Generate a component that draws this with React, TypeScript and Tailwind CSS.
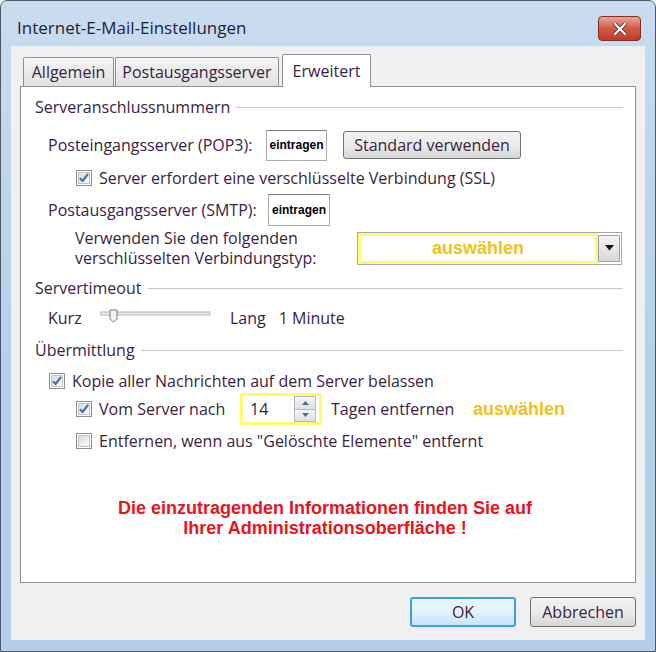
import React from 'react';

const label = 'text-[16px] text-[#3a2340] leading-[20px] whitespace-nowrap';
const arial = { fontFamily: '"Liberation Sans", Arial, sans-serif' };

function Check({ checked }: { checked: boolean }) {
  return (
    <svg width="16" height="16" viewBox="0 0 16 16" className="shrink-0">
      <defs>
        <linearGradient id="cbg" x1="0" y1="0" x2="1" y2="1">
          <stop offset="0" stopColor="#dcdcdc" />
          <stop offset="1" stopColor="#fbfbfb" />
        </linearGradient>
      </defs>
      <rect x="0.5" y="0.5" width="15" height="15" fill="#fff" stroke="#8e8f8f" />
      <rect x="2.5" y="2.5" width="11" height="11" fill="url(#cbg)" stroke="#c3c3c3" />
      {checked && (
        <path d="M4 8.2 L6.6 11 L12 3.8" fill="none" stroke="#4a6fb5" strokeWidth="2.2" strokeLinejoin="round" />
      )}
    </svg>
  );
}

function Section({ title }: { title: string }) {
  return (
    <div className="flex items-center h-[22px]">
      <span className={label}>{title}</span>
      <div className="flex-1 h-px bg-[#c8c8c8] ml-[6px] mr-[12px]" />
    </div>
  );
}

function Tab({ text, width, active }: { text: string; width: string; active?: boolean }) {
  if (active) {
    return (
      <div className={`${width} h-[33px] bg-white border border-b-0 border-[#8d9096] rounded-t-[2px] flex justify-center items-start pt-[4px] -mb-px relative z-10 text-[16px] text-[#3a2340]`}>
        {text}
      </div>
    );
  }
  return (
    <div className={`${width} h-[29px] mt-[2px] bg-gradient-to-b from-[#f4f4f4] to-[#e1e1e1] border border-b-0 border-[#8d9096] rounded-t-[2px] flex justify-center items-center text-[16px] text-[#3a2340]`}>
      {text}
    </div>
  );
}

export default function App() {
  return (
    <div className="w-[656px] h-[652px] overflow-hidden bg-white" style={{ fontFamily: '"Open Sans", "Noto Sans", sans-serif' }}>
      <div className="w-[656px] h-[652px] border border-[#4b5a6b] rounded-t-[7px] bg-gradient-to-b from-[#c9dcef] via-[#b8d0ea] to-[#b5cde8] flex flex-col">
        {/* Titelleiste */}
        <div className="h-[45px] flex items-start justify-between pl-[16px] pr-[14px] pt-[14px]">
          <span className="text-[17px] leading-[26px] text-[#1e1e3a]">Internet-E-Mail-Einstellungen</span>
          <div className="w-[43px] h-[25px] mt-[1px] rounded-[4px] border border-[#7b3327] bg-gradient-to-b from-[#e9a597] via-[#d25a48] to-[#c13a26] flex items-center justify-center">
            <svg width="16" height="12" viewBox="0 0 16 12">
              <path d="M3 1 L13 11 M13 1 L3 11" stroke="#6b2a22" strokeWidth="4" strokeLinecap="round" />
              <path d="M3 1 L13 11 M13 1 L3 11" stroke="#ffffff" strokeWidth="2.4" strokeLinecap="round" />
            </svg>
          </div>
        </div>

        {/* Clientbereich */}
        <div className="flex-1 mx-[10px] mb-[11px] bg-[#f0f0f0] border border-[#e8f0f8] flex flex-col px-[8px] pt-[6px]">
          {/* Reiter */}
          <div className="flex items-end h-[33px] pl-[3px] gap-[1px]">
            <Tab text="Allgemein" width="w-[91px]" />
            <Tab text="Postausgangsserver" width="w-[164px]" />
            <div className="w-px" />
            <Tab text="Erweitert" width="w-[89px]" active />
          </div>

          {/* Reiterinhalt */}
          <div className="h-[497px] bg-white border border-[#8d9096] pl-[14px] pt-[9px] flex flex-col">
            <Section title="Serveranschlussnummern" />

            <div className="flex items-center h-[32px] mt-[11px] ml-[13px]">
              <span className={`${label} w-[218px]`}>Posteingangsserver (POP3):</span>
              <div className="w-[61px] h-[31px] border border-[#abadb3] border-t-[#7a7d84] bg-white flex items-center justify-center text-[12px] font-bold text-black" style={arial}>
                eintragen
              </div>
              <div className="ml-[16px] w-[178px] h-[28px] rounded-[3px] border border-[#707070] bg-gradient-to-b from-[#f2f2f2] via-[#ebebeb] to-[#d6d6d6] flex items-center justify-center text-[16px] text-[#3a2340]">
                Standard verwenden
              </div>
            </div>

            <div className="flex items-center gap-[7px] h-[20px] mt-[7px] ml-[41px]">
              <Check checked />
              <span className={label}>Server erfordert eine verschlüsselte Verbindung (SSL)</span>
            </div>

            <div className="flex items-center h-[33px] mt-[5px] ml-[13px]">
              <span className={`${label} w-[220px]`}>Postausgangsserver (SMTP):</span>
              <div className="w-[62px] h-[32px] border border-[#abadb3] border-t-[#7a7d84] bg-white flex items-center justify-center text-[12px] font-bold text-black" style={arial}>
                eintragen
              </div>
            </div>

            <div className="flex items-center h-[36px] mt-[4px] ml-[40px]">
              <div className={`${label} w-[282px] leading-[18px]`}>
                Verwenden Sie den folgenden
                <br />
                verschlüsselten Verbindungstyp:
              </div>
              <div className="flex items-center h-[33px] w-[265px] border border-[#a9a9a9] bg-white pr-[1px]">
                <div className="w-[240px] h-[31px] border-[3px] border-[#fffa73] flex items-center justify-center text-[18px] font-bold text-[#f2c21a]" style={arial}>
                  auswählen
                </div>
                <div className="w-[22px] h-[27px] ml-auto border border-[#a0a0a0] bg-gradient-to-b from-[#f4f4f4] to-[#d8d8d8] flex items-center justify-center">
                  <svg width="9" height="6" viewBox="0 0 9 6">
                    <path d="M0 0 H9 L4.5 5.5 Z" fill="#111" />
                  </svg>
                </div>
              </div>
            </div>

            <div className="mt-[11px]">
              <Section title="Servertimeout" />
            </div>

            <div className="flex items-center h-[22px] mt-[8px] ml-[13px]">
              <span className={`${label} w-[52px]`}>Kurz</span>
              <svg width="112" height="16" viewBox="0 0 112 16" className="shrink-0 -mt-[4px]">
                <rect x="0" y="4" width="110" height="3" fill="#e7eaea" stroke="#b4b4b4" strokeWidth="1" />
                <path d="M10 2 H17 V11 L13.5 14 L10 11 Z" fill="#f2f2f2" stroke="#7c7c7c" />
              </svg>
              <span className={`${label} ml-[18px]`}>Lang</span>
              <span className={`${label} ml-[13px]`}>1 Minute</span>
            </div>

            <div className="mt-[10px]">
              <Section title="Übermittlung" />
            </div>

            <div className="flex items-center gap-[7px] h-[20px] mt-[10px] ml-[14px]">
              <Check checked />
              <span className={label}>Kopie aller Nachrichten auf dem Server belassen</span>
            </div>

            <div className="flex items-center h-[32px] mt-[2px] ml-[41px]">
              <Check checked />
              <span className={`${label} ml-[7px] w-[141px]`}>Vom Server nach</span>
              <div className="w-[82px] h-[32px] border-[3px] border-[#fffa73] bg-white flex items-center pl-[7px] pr-[3px]">
                <span className="text-[16px] text-[#3a2340] flex-1">14</span>
                <div className="w-[22px] h-[26px] flex flex-col border border-[#b9b9b9]">
                  <div className="flex-1 bg-gradient-to-b from-[#f5f5f5] to-[#e1e1e1] border-b border-[#b9b9b9] flex items-center justify-center">
                    <svg width="7" height="4" viewBox="0 0 7 4"><path d="M0 4 H7 L3.5 0 Z" fill="#4a6b9a" /></svg>
                  </div>
                  <div className="flex-1 bg-gradient-to-b from-[#f5f5f5] to-[#e1e1e1] flex items-center justify-center">
                    <svg width="7" height="4" viewBox="0 0 7 4"><path d="M0 0 H7 L3.5 4 Z" fill="#4a6b9a" /></svg>
                  </div>
                </div>
              </div>
              <span className={`${label} ml-[9px] w-[142px]`}>Tagen entfernen</span>
              <span className="text-[18px] font-bold text-[#f2c21a]" style={arial}>
                auswählen
              </span>
            </div>

            <div className="flex items-center gap-[7px] h-[20px] mt-[6px] ml-[41px]">
              <Check checked={false} />
              <span className={label}>Entfernen, wenn aus "Gelöschte Elemente" entfernt</span>
            </div>

            <div className="mt-[47px] pr-[20px] text-center text-[18px] leading-[20px] font-bold text-[#e8141c]" style={arial}>
              Die einzutragenden Informationen finden Sie auf
              <br />
              Ihrer Administrationsoberfläche !
            </div>
          </div>

          {/* Schaltflächen */}
          <div className="flex justify-end gap-[14px] mt-[14px]">
            <div className="w-[106px] h-[30px] rounded-[3px] border-2 border-[#3ca3d8] bg-gradient-to-b from-[#eaf6fd] via-[#e2f1fb] to-[#c8e5f8] flex items-center justify-center text-[16px] text-[#3a2340]">
              OK
            </div>
            <div className="w-[106px] h-[30px] rounded-[3px] border border-[#707070] bg-gradient-to-b from-[#f2f2f2] via-[#ebebeb] to-[#d6d6d6] flex items-center justify-center text-[16px] text-[#3a2340]">
              Abbrechen
            </div>
          </div>
        </div>
      </div>
    </div>
  );
}
